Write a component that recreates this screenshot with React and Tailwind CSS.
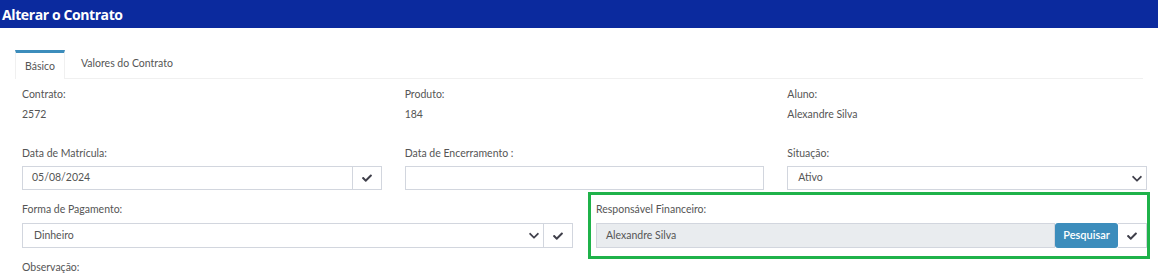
import React from "react";

const Check = () => (
  <svg width="10" height="8" viewBox="0 0 512 400" className="fill-[#3f3f4a]">
    <path d="M173.9 390.5L7.5 224.1c-10-10-10-26.2 0-36.2l36.2-36.2c10-10 26.2-10 36.2 0L192 263.8 432.1 23.7c10-10 26.2-10 36.2 0l36.2 36.2c10 10 10 26.2 0 36.2L210.1 390.5c-10 10-26.2 10-36.2 0z" />
  </svg>
);

const Chevron = () => (
  <svg width="10" height="7" viewBox="0 0 448 300" className="fill-[#3f3f4a]">
    <path d="M207 286.9L12.7 92.6c-9.4-9.4-9.4-24.6 0-33.9l22.7-22.7c9.4-9.4 24.5-9.4 33.9 0L224 190.2 378.7 36c9.4-9.3 24.5-9.3 33.9 0l22.7 22.7c9.4 9.4 9.4 24.6 0 33.9L241 286.9c-9.4 9.4-24.6 9.4-34 0z" />
  </svg>
);

const Label = ({ children }) => (
  <div className="h-[15px] leading-[15px] text-[10.5px] text-[#555]">{children}</div>
);

export default function App() {
  return (
    <div className="w-[1158px] h-[273px] overflow-hidden bg-white font-['Lato',sans-serif]">
      <div className="h-[28px] bg-[#0b2a9e] flex items-center pl-[2px]">
        <span className="text-white font-bold text-[14px] font-['Open_Sans',sans-serif] tracking-[-0.4px]">
          Alterar o Contrato
        </span>
      </div>

      <div className="mt-[22px] mx-[15px] flex border-b border-[#f0f0f0] h-[29px]">
        <div className="w-[50px] border-t-[3px] border-[#3c8dbc] border-x border-x-[#f0f0f0] bg-white -mb-px flex items-center justify-center pt-[1px] text-[10.5px] text-[#555]">
          Básico
        </div>
        <div className="pl-[16px] pt-[6px] text-[10.5px] text-[#555]">
          Valores do Contrato
        </div>
      </div>

      <div className="pl-[22px] pr-[11px]">
        <div className="grid grid-cols-3 gap-x-[23px] mt-[8px]">
          <div>
            <Label>Contrato:</Label>
            <div className="mt-[5px] h-[15px] leading-[15px] text-[10.5px] text-[#555]">2572</div>
          </div>
          <div>
            <Label>Produto:</Label>
            <div className="mt-[5px] h-[15px] leading-[15px] text-[10.5px] text-[#555]">184</div>
          </div>
          <div>
            <Label>Aluno:</Label>
            <div className="mt-[5px] h-[15px] leading-[15px] text-[10.5px] text-[#555]">Alexandre Silva</div>
          </div>
        </div>

        <div className="grid grid-cols-3 gap-x-[23px] mt-[24px]">
          <div>
            <Label>Data de Matrícula:</Label>
            <div className="mt-[5px] h-[24px] flex border border-[#d2d6de]">
              <div className="flex-1 flex items-center pl-[9px] text-[10.5px] text-[#555]">05/08/2024</div>
              <div className="w-[29px] border-l border-[#d2d6de] flex items-center justify-center">
                <Check />
              </div>
            </div>
          </div>
          <div>
            <Label>Data de Encerramento :</Label>
            <div className="mt-[5px] h-[24px] border border-[#d2d6de]"></div>
          </div>
          <div>
            <Label>Situação:</Label>
            <div className="mt-[5px] h-[24px] flex items-center justify-between border border-[#d2d6de] pl-[10px] pr-[4px] text-[10.5px] text-[#555]">
              <span>Ativo</span>
              <Chevron />
            </div>
          </div>
        </div>

        <div className="grid grid-cols-2 gap-x-[23px] mt-[12px]">
          <div>
            <Label>Forma de Pagamento:</Label>
            <div className="mt-[6px] h-[25px] flex border border-[#d2d6de]">
              <div className="flex-1 flex items-center justify-between pl-[11px] pr-[4px] text-[10.5px] text-[#555]">
                <span>Dinheiro</span>
                <Chevron />
              </div>
              <div className="w-[29px] border-l border-[#d2d6de] flex items-center justify-center">
                <Check />
              </div>
            </div>
          </div>
          <div className="relative">
            <div className="absolute -left-[8px] -right-[3px] -top-[10px] -bottom-[11px] border-[3px] border-[#1fb24a] pointer-events-none"></div>
            <Label>Responsável Financeiro:</Label>
            <div className="mt-[6px] h-[25px] flex">
              <div className="flex-1 flex items-center pl-[9px] bg-[#e9ecef] border border-[#d2d6de] text-[10.5px] text-[#555]">
                Alexandre Silva
              </div>
              <div className="w-[63px] bg-[#3c8dbc] rounded-[3px] flex items-center justify-center text-white text-[11px] font-semibold">
                Pesquisar
              </div>
              <div className="w-[29px] border border-l-0 border-[#d2d6de] flex items-center justify-center">
                <Check />
              </div>
            </div>
          </div>
        </div>

        <div className="mt-[12px]">
          <Label>Observação:</Label>
        </div>
      </div>
    </div>
  );
}
